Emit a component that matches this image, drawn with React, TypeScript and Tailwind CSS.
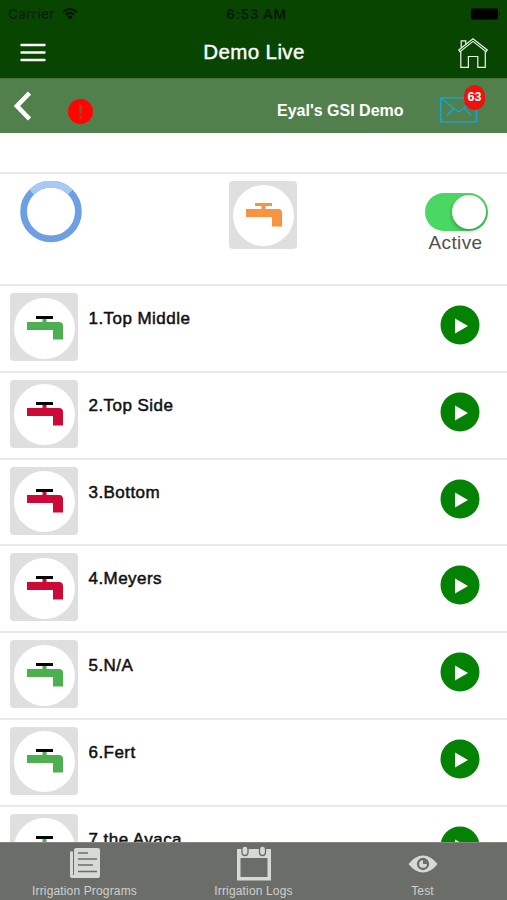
import React from "react";

function Faucet({ body, handle }: { body: string; handle: string }) {
  return (
    <div className="flex h-[68px] w-[68px] shrink-0 items-center justify-center rounded-[4px] bg-[#dfdfdf] pt-[2px]">
      <div className="h-[61px] w-[61px] rounded-full bg-white">
        <svg viewBox="0 0 61 61" className="h-[61px] w-[61px]">
          <rect x="22" y="18" width="17" height="3" fill={handle} />
          <path d="M28.5 21h4v3H45q4 0 4 4V41.5H39V32H13V24H28.5z" fill={body} />
        </svg>
      </div>
    </div>
  );
}

const zones = [
  { name: "1.Top Middle", color: "#4caf50" },
  { name: "2.Top Side", color: "#cc0a37" },
  { name: "3.Bottom", color: "#cc0a37" },
  { name: "4.Meyers", color: "#cc0a37" },
  { name: "5.N/A", color: "#4caf50" },
  { name: "6.Fert", color: "#4caf50" },
  { name: "7.the Avaca", color: "#4caf50" },
];

function ZoneRow({ name, color }: { name: string; color: string }) {
  return (
    <div className="flex h-[86.75px] shrink-0 items-start border-t-2 border-[#e9e9e9] pt-[7px] pr-[27px] pl-[10px]">
      <Faucet body={color} handle="#050505" />
      <div className="ml-[10.5px] pt-[15px] text-[17px] leading-[22px] tracking-[0.45px] whitespace-nowrap text-[#111] [-webkit-text-stroke:0.5px_#111]">
        {name}
      </div>
      <svg viewBox="0 0 40 40" className="mt-[12px] ml-auto h-[40px] w-[40px]">
        <circle cx="20" cy="20" r="19.5" fill="#048204" />
        <path d="M15 13.5L28 21L15 28.5z" fill="white" />
      </svg>
    </div>
  );
}

export default function App() {
  return (
    <div className="flex h-[900px] w-[507px] flex-col overflow-hidden bg-white font-['Liberation_Sans',Arial,sans-serif]">
      <header className="h-[78px] shrink-0 bg-[#084500] text-[#041a02]">
        <div className="grid h-[28px] grid-cols-3 items-center pr-[6px] pl-[8px] font-[Inter,sans-serif] text-[13.5px]">
          <div className="flex items-center gap-[7px]">
            <span className="tracking-[0.35px]">Carrier</span>
            <svg viewBox="0 0 16 12" className="h-[12px] w-[16px]" fill="none" stroke="#031801" strokeWidth="2">
              <path d="M1 4.2Q8-2.2 15 4.2M3.5 7Q8 2.8 12.5 7" />
              <path d="M5.2 8.8Q8 6.2 10.8 8.8L8 11.8z" fill="#031801" stroke="none" />
            </svg>
          </div>
          <div className="pl-[4px] text-center font-semibold tracking-[0.65px] whitespace-nowrap text-[#031801]">6:53 AM</div>
          <svg viewBox="0 0 30 12" className="ml-auto h-[12px] w-[30px]">
            <rect x="0" y="0.5" width="27" height="11" rx="1.5" fill="#000" />
            <path d="M28 4q2 2 0 4z" fill="#000" />
          </svg>
        </div>
        <div className="grid h-[49px] grid-cols-[1fr_auto_1fr] items-center pr-[19px] pl-[20px] text-white">
          <svg viewBox="0 0 26 19" className="h-[19px] w-[26px]" stroke="white" strokeWidth="2.4" strokeLinecap="round">
            <path d="M1.5 2H24.5M1.5 9.5H24.5M1.5 17H24.5" />
          </svg>
          <h1 className="text-[20.5px] tracking-[0.4px] [-webkit-text-stroke:0.4px_white]">Demo Live</h1>
          <svg viewBox="0 0 30 30" className="ml-auto h-[30px] w-[30px]" fill="none" stroke="#f0f5ef" strokeWidth="1.2">
            <path d="M.8 12L15 .8L29.2 12L28 13.6L15 3.4L2 13.6z" />
            <path d="M2.8 13V29.4H10.4V18.5H19.8V29.4H27.3V13M3.2 9.5V2.8H7.8V6.2" />
          </svg>
        </div>
      </header>

      <div className="flex h-[54.5px] shrink-0 items-center border-t border-[#487541] bg-[#52804c] pr-[22px] pl-[14px]">
        <svg viewBox="0 0 17 30" className="mt-[1px] h-[30px] w-[17px]" fill="none" stroke="white" strokeWidth="4.5">
          <path d="M15.5 2L3 15L15.5 28" />
        </svg>
        <div className="mt-[12px] ml-[37px] flex h-[25px] w-[25px] items-center justify-center rounded-full bg-[#ff0502]">
          <svg viewBox="0 0 5 14" className="h-[14px] w-[5px]">
            <path d="M1 0H4L3.5 9H1.5zM1.3 11H3.7V13.5H1.3z" fill="#8d5427" />
          </svg>
        </div>
        <div className="mt-[10px] ml-[184px] text-[16px] font-bold whitespace-nowrap text-white">Eyal's GSI Demo</div>
        <div className="relative mt-[8px] ml-auto h-[26px] w-[45px]">
          <svg viewBox="0 0 45 26" className="h-[26px] w-[45px]" fill="none" stroke="#12a5dc" strokeWidth="1.5">
            <rect x=".8" y=".8" width="35.6" height="24" />
            <path d="M1 1L14 11.5L18.8 15L36 1M7 18.5L14 11.5M24.5 11.5L31 18.5" />
          </svg>
          <div className="absolute top-[-12px] left-[24px] flex h-[25px] w-[21px] items-center justify-center rounded-[11px] bg-[#ed120e] text-[12.5px] font-bold text-white">
            63
          </div>
        </div>
      </div>

      <main className="flex h-[709px] shrink-0 flex-col overflow-hidden">
        <div className="h-[39px] shrink-0" />
        <section className="flex h-[112.5px] shrink-0 items-start border-t-2 border-[#e9e9e9] pt-[7px] pr-[19px] pl-[20px]">
          <svg viewBox="0 0 62 62" className="h-[62px] w-[62px]" fill="none" strokeWidth="6.8">
            <circle cx="31" cy="30.5" r="27.4" stroke="#6da0e3" />
            <path d="M11.6 11.1A27.4 27.4 0 0 1 50.4 11.1" stroke="#a8c9f2" />
          </svg>
          <div className="ml-[147px]">
            <Faucet body="#f79442" handle="#f79442" />
          </div>
          <div className="ml-auto flex flex-col items-center pt-[12px]">
            <div className="flex h-[38px] w-[63px] items-center justify-end rounded-full bg-[#4bd763] pr-[2px]">
              <div className="h-[34px] w-[34px] rounded-full bg-white shadow-[0_2px_4px_rgba(0,0,0,0.3)]" />
            </div>
            <div className="mr-[2px] text-[19px] leading-[24px] tracking-[0.35px] text-[#505050]">Active</div>
          </div>
        </section>
        {zones.map((zone) => (
          <ZoneRow key={zone.name} name={zone.name} color={zone.color} />
        ))}
      </main>

      <footer className="grid flex-1 grid-cols-3 border-t border-[#858681] bg-[#6b6d68] text-[12px] tracking-[0.15px] text-[#d0d1ce]">
        <div className="flex flex-col items-center pt-[5px]">
          <svg viewBox="0 0 30 30" className="h-[30px] w-[30px]">
            <path d="M0 3.5H3V27H4V2Q4 0 6 0H28q2 0 2 2V28q0 2-2 2H2q-2 0-2-2z" fill="#d7d9d4" />
            <path d="M8 5H18M8 11H27M8 17H23M8 23.5H27" stroke="#6b6d68" strokeWidth="1.3" />
          </svg>
          <span className="mt-[5px] leading-[16px] whitespace-nowrap">Irrigation Programs</span>
        </div>
        <div className="flex flex-col items-center pt-[2px]">
          <svg viewBox="0 0 36 36" className="h-[36px] w-[36px]">
            <path d="M1 4H35V35.5H1zM4.5 13V32H31.5V13z" fill="#d7d9d4" fillRule="evenodd" />
            <rect x="6" y="1" width="6" height="9.5" rx="3" fill="#d7d9d4" stroke="#6b6d68" strokeWidth="1.3" />
            <rect x="23.5" y="1" width="6" height="9.5" rx="3" fill="#d7d9d4" stroke="#6b6d68" strokeWidth="1.3" />
          </svg>
          <span className="mt-[2px] leading-[16px]">Irrigation Logs</span>
        </div>
        <div className="flex flex-col items-center pt-[12px]">
          <svg viewBox="0 0 30 18" className="h-[18px] w-[30px]">
            <path d="M.5 9Q7 .5 15 .5T29.5 9Q23 17.5 15 17.5T.5 9z" fill="#d7d9d4" />
            <circle cx="15" cy="9" r="5" fill="none" stroke="#6b6d68" strokeWidth="2.3" />
            <path d="M15 5V9H19A4 4 0 0 0 15 5z" fill="#6b6d68" />
          </svg>
          <span className="mt-[10px] leading-[16px]">Test</span>
        </div>
      </footer>
    </div>
  );
}
